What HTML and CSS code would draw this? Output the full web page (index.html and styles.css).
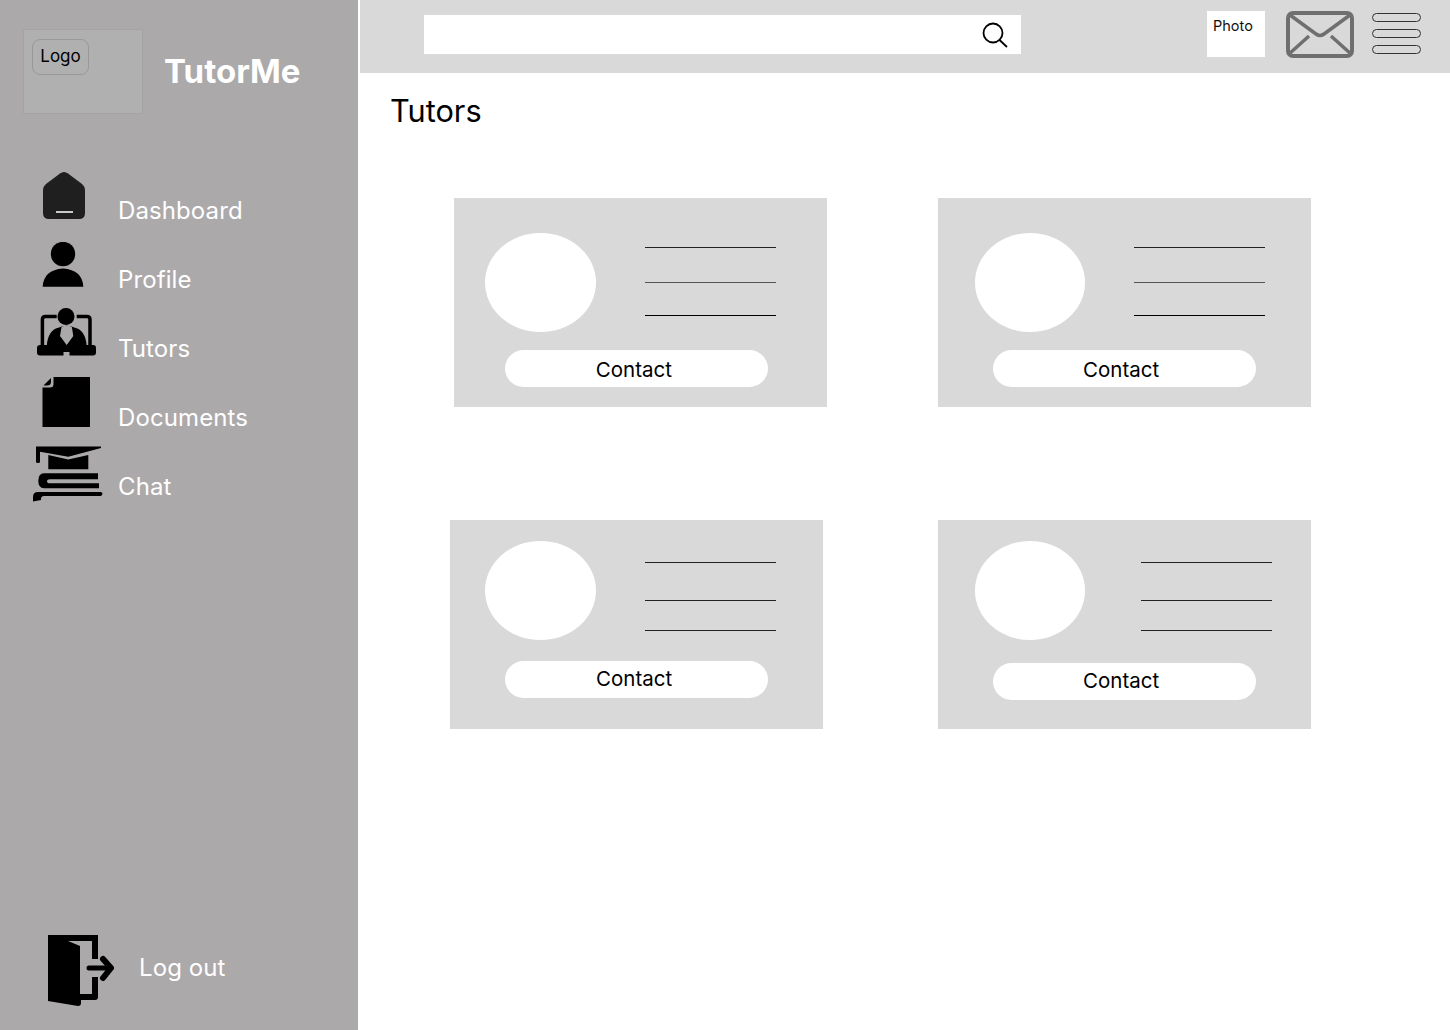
FILE: index.html
```html
<!DOCTYPE html>
<html lang="en">
<head>
<meta charset="utf-8">
<title>TutorMe</title>
<link rel="stylesheet" href="styles.css">
</head>
<body>
<div class="app">
  <aside class="sidebar">
    <div class="brand">
      <div class="logo-box"><span class="logo-tag">Logo</span></div>
      <div class="brand-name">TutorMe</div>
    </div>
    <nav class="nav">
      <a class="nav-item nav-dash">
        <span class="nav-icon"><svg width="44" height="50" viewBox="0 0 44 50"><path d="M22 1 Q24 1 26 2.500 L40 13 Q43 15.500 43 19 V42 Q43 48 37 48 H7 Q1 48 1 42 V19 Q1 15.500 4 13 L18 2.500 Q20 1 22 1Z" fill="#1f1f1f"/><rect x="14" y="40" width="17" height="2" fill="#c9c9c9"/></svg></span>
        <span class="nav-label">Dashboard</span>
      </a>
      <a class="nav-item nav-profile">
        <span class="nav-icon"><svg width="42" height="46" viewBox="0 0 42 46"><circle cx="21" cy="12" r="12.200"/><path d="M0.700 44.700 Q1.500 28 21 26.500 Q40.500 28 41.300 44.700Z"/></svg></span>
        <span class="nav-label">Profile</span>
      </a>
      <a class="nav-item nav-tutors">
        <span class="nav-icon"><svg width="60" height="50" viewBox="0 0 60 50"><circle cx="29" cy="10.500" r="8.500"/><path d="M19.700 10.500 H8.500 Q5.400 10.500 5.400 13.600 V40 M39.700 10.500 H49.900 Q53 10.500 53 13.600 V40" fill="none" stroke="#000" stroke-width="3.500"/><path fill-rule="evenodd" d="M9.700 40 Q11 24 21.300 21.700 Q29.700 18 38 21.700 Q48.500 24 49.700 40Z M24.700 20 H34.700 L36.300 30 L29.700 39 L23 30Z"/><path d="M3 39 H56 Q59 39 59 42 V46.500 Q59 49.500 56 49.500 H32.500 V46 H26.500 V49.500 H3 Q0 49.500 0 46.500 V42 Q0 39 3 39Z"/></svg></span>
        <span class="nav-label">Tutors</span>
      </a>
      <a class="nav-item nav-docs">
        <span class="nav-icon"><svg width="48" height="50" viewBox="0 0 48 50"><path d="M11.500 0 H48 V50 H0.500 V10.500 H8 Q11.500 10.500 11.500 7Z"/><path d="M9 1 V5 Q9 8.500 5 8.500 H1.500 Z"/></svg></span>
        <span class="nav-label">Documents</span>
      </a>
      <a class="nav-item nav-chat">
        <span class="nav-icon"><svg width="72" height="56" viewBox="0 0 72 56"><path d="M4 0.500 H69 V2 L36.300 10.700 L8 5.700 V16 Q8 17 6 17 Q4 17 4 16Z"/><path d="M16.300 9 L36.300 13.500 L56.300 9 V23.300 H16.300Z"/><path d="M12 27.300 H66 V33.300 H18 Q15 33.300 15 35.300 Q15 37.300 18 37.300 H67 V42.300 H12 Q6.300 42.300 6.300 34.800 Q6.300 27.300 12 27.300Z"/><path d="M6 46 H69 Q72 47.500 69 50 H12 Q9 50 9 53 V54 L1 55.500 V51 Q1 46 6 46Z"/></svg></span>
        <span class="nav-label">Chat</span>
      </a>
    </nav>
    <a class="logout">
      <span class="logout-icon"><svg width="66" height="72" viewBox="0 0 66 72"><path d="M0 0 H50 V24 H44 V6 H20 L32 11 V59 H44 V42 H50 V62 Q50 65 47 65 H33 V68 Q33 71 30 71 L0 66Z"/><path d="M41 33 H61" stroke="#000" stroke-width="5" stroke-linecap="round" fill="none"/><path d="M55 24 L63 33 L55 43" stroke="#000" stroke-width="6" stroke-linecap="round" stroke-linejoin="round" fill="none"/></svg></span>
      <span class="logout-label">Log out</span>
    </a>
  </aside>
  <main class="main">
    <header class="topbar">
      <div class="search">
        <svg width="26" height="26" viewBox="0 0 26 26"><circle cx="11" cy="11" r="9.500" fill="none" stroke="#000" stroke-width="1.800"/><path d="M17.500 18 L25 25" stroke="#000" stroke-width="1.800"/></svg>
      </div>
      <div class="top-right">
        <div class="photo">Photo</div>
        <svg class="mail" width="68" height="47" viewBox="0 0 68 47"><rect x="2" y="2" width="64" height="43" rx="5" fill="none" stroke="#6f6f6f" stroke-width="4"/><path d="M4 4 L30 23 Q34 26 38 23 L64 4 M3 43 L23 25 M65 43 L45 25" fill="none" stroke="#6f6f6f" stroke-width="3.500"/></svg>
        <div class="burger"><span></span><span></span><span></span></div>
      </div>
    </header>
    <h1 class="title">Tutors</h1>
    <section class="grid">
      <article class="card card-a">
        <div class="card-top">
          <div class="avatar"></div>
          <div class="lines lines-a"><i></i><i></i><i></i></div>
        </div>
        <button class="contact"><span>Contact</span></button>
      </article>
      <article class="card card-b">
        <div class="card-top">
          <div class="avatar"></div>
          <div class="lines lines-a lines-b"><i></i><i></i><i></i></div>
        </div>
        <button class="contact"><span>Contact</span></button>
      </article>
      <article class="card card-c">
        <div class="card-top">
          <div class="avatar"></div>
          <div class="lines lines-c"><i></i><i></i><i></i></div>
        </div>
        <button class="contact"><span>Contact</span></button>
      </article>
      <article class="card card-d">
        <div class="card-top">
          <div class="avatar"></div>
          <div class="lines lines-c lines-d"><i></i><i></i><i></i></div>
        </div>
        <button class="contact"><span>Contact</span></button>
      </article>
    </section>
  </main>
</div>
</body>
</html>
```

FILE: styles.css
```css
* { box-sizing: border-box; }
html, body { margin: 0; padding: 0; height: 100%; background: #fff; }
body { font-family: Inter, "Liberation Sans", sans-serif; color: #000; overflow: hidden; }
.app { display: flex; width: 1450px; height: 1030px; }

.sidebar { width: 358px; flex: none; background: #aba9aa; display: flex; flex-direction: column; }
.brand { display: flex; align-items: center; padding: 29px 0 0 23px; height: 114px; }
.logo-box { width: 120px; height: 85px; background: #b0b0b0; border: 1px solid #a4a4a4; padding: 9px 0 0 8px; }
.logo-tag { display: block; width: 57px; height: 36px; border: 1px solid #999; border-radius: 8px; font-size: 17px; line-height: 33px; text-align: center; color: #000; }
.brand-name { margin: -2px 0 0 21px; font-size: 33px; font-weight: 700; color: #fff; line-height: 40px; }

.nav { display: flex; flex-direction: column; margin-top: 56px; }
.nav-item { position: relative; height: 69px; display: block; }
.nav-label { position: absolute; left: 118px; top: 26px; font-size: 24px; line-height: 30px; color: #fff; letter-spacing: 0.1px; }
.nav-icon { position: absolute; display: block; line-height: 0; }
.nav-dash .nav-icon { left: 42px; top: 1px; }
.nav-profile .nav-icon { left: 42px; top: 3px; }
.nav-tutors .nav-icon { left: 37px; top: -2px; }
.nav-docs .nav-icon { left: 42px; top: 0; }
.nav-chat .nav-icon { left: 32px; top: 0; }

.logout { margin-top: auto; height: 95px; position: relative; display: block; }
.logout-icon { position: absolute; left: 48px; top: 0; line-height: 0; display: block; }
.logout-label { position: absolute; left: 139px; top: 18px; font-size: 24px; line-height: 30px; color: #fff; letter-spacing: 0.1px; }

.main { flex: 1; margin-left: 2px; display: flex; flex-direction: column; }
.topbar { height: 73px; background: #d9d9d9; display: flex; justify-content: space-between; padding: 15px 29px 0 64px; }
.search { width: 597px; height: 39px; background: #fff; display: flex; justify-content: flex-end; align-items: center; padding-right: 13px; }
.top-right { display: flex; align-items: flex-start; margin-top: -4px; }
.photo { width: 58px; height: 46px; background: #fff; font-size: 14.500px; line-height: 20px; padding: 5px 0 0 6px; color: #111; }
.mail { margin-left: 21px; }
.burger { margin-left: 18px; margin-top: 2px; width: 49px; display: flex; flex-direction: column; gap: 7px; }
.burger span { display: block; height: 9px; border: 1.600px solid #333; border-radius: 6px; }

.title { margin: 19px 0 0 30px; font-size: 30.700px; font-weight: 400; line-height: 38px; }

.grid { display: grid; grid-template-columns: repeat(2, 373px); grid-template-rows: 209px 209px; column-gap: 111px; row-gap: 113px; margin: 68px 0 0 94px; }
.card { background: #d9d9d9; display: flex; flex-direction: column; }
.card-top { display: flex; height: 135px; padding-left: 31.300px; }
.avatar { width: 110.400px; height: 99px; border-radius: 50%; background: #fff; margin-top: 35px; flex: none; }
.lines { width: 131px; display: flex; flex-direction: column; }
.lines i { display: block; height: 1px; background: #222; }
.lines-a { margin: 49px 0 0 49.600px; }
.lines-a i:nth-child(2) { margin-top: 34px; background: #555; }
.lines-a i:nth-child(3) { margin-top: 32px; background: #000; }
.contact { display: block; border: 0; background: #fff; width: 263.300px; height: 37px; border-radius: 19px; margin: 17px 0 0 50.700px; padding: 0; font: 400 20.500px/37px Inter, "Liberation Sans", sans-serif; color: #000; text-align: center; }
.contact span { display: block; margin: 1px 0 0 -5px; height: 36px; }

.card-b .card-top { padding-left: 37px; }
.card-b .contact { margin-left: 55px; }
.card-b .contact span { margin-left: -7px; }
.lines-b { margin-left: 48.600px; }
.card-c { margin-left: -4px; margin-right: 4px; }
.card-c .card-top { padding-left: 35.300px; }
.card-c .avatar, .card-d .avatar { margin-top: 21px; }
.lines-c { margin: 42px 0 0 49.600px; }
.lines-c i:nth-child(2) { margin-top: 37px; }
.lines-c i:nth-child(3) { margin-top: 29px; }
.card-c .contact { margin-top: 6px; margin-left: 55px; }
.card-c .contact span, .card-d .contact span { margin-top: -1px; height: 38px; }
.card-d .card-top { padding-left: 37px; }
.lines-d { margin-left: 55.600px; }
.card-d .contact { margin-top: 8px; margin-left: 55px; }
.card-d .contact span { margin-left: -7px; }
```
